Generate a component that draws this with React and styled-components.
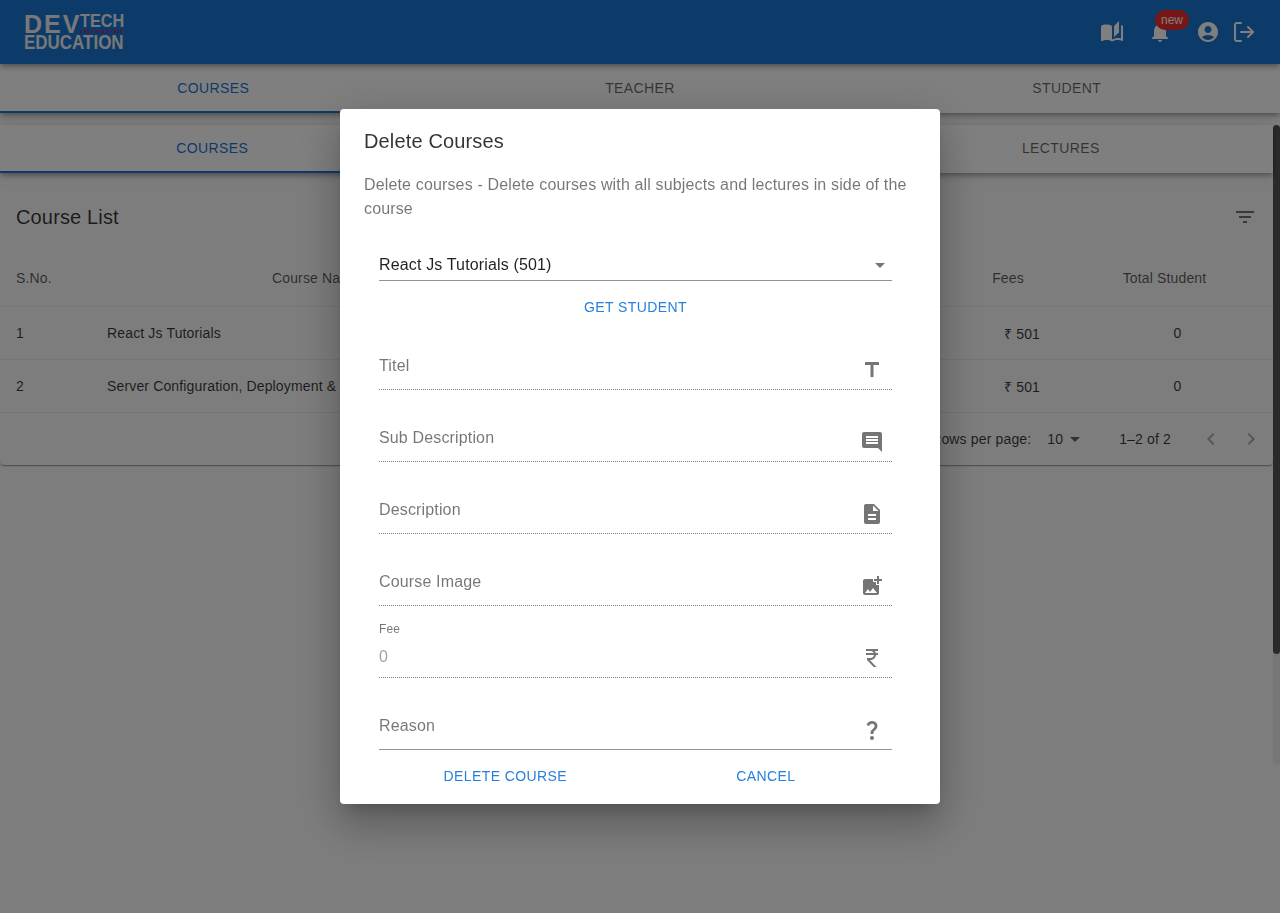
import React from "react";
import styled, { createGlobalStyle } from "styled-components";
import {
  MdAutoStories,
  MdNotifications,
  MdAccountCircle,
  MdFilterList,
  MdArrowDropDown,
  MdChevronLeft,
  MdChevronRight,
  MdTitle,
  MdComment,
  MdDescription,
  MdAddPhotoAlternate,
  MdCurrencyRupee,
  MdQuestionMark
} from "react-icons/md";
import { LogOut } from "lucide-react";

const GlobalStyle = createGlobalStyle`
  * { box-sizing: border-box; }
  html, body {
    margin: 0;
    height: 913px;
    overflow: hidden;
    background: #fafafa;
    font-family: "Liberation Sans", Arial, sans-serif;
    color: rgba(0, 0, 0, 0.87);
  }
`;

const AppBar = styled.header`
  position: relative;
  z-index: 3;
  height: 64px;
  padding: 0 24px;
  display: flex;
  align-items: center;
  justify-content: space-between;
  background: #1976d2;
  color: #fff;
  box-shadow: 0 2px 4px -1px rgba(0,0,0,.2), 0 4px 5px rgba(0,0,0,.14), 0 1px 10px rgba(0,0,0,.12);
`;

const Logo = styled.div`
  width: 100px;
  height: 34px;
  margin-top: -1px;
  color: #f0f0f0;
  font-weight: 700;
  white-space: nowrap;
`;

const LogoTop = styled.div`
  display: flex;
  height: 19px;
`;

const LogoDev = styled.span`
  width: 56px;
  font-size: 25px;
  line-height: 19px;
  letter-spacing: 2px;
`;

const LogoSide = styled.div`
  display: flex;
  flex-direction: column;
`;

const LogoTech = styled.span`
  font-size: 18px;
  line-height: 13px;
  transform: scaleX(0.9);
  transform-origin: left;
`;

const LogoTag = styled.span`
  margin-top: 1px;
  font-size: 4.4px;
  line-height: 5px;
  color: #c2185b;
`;

const LogoBottom = styled.div`
  margin-top: 1px;
  font-size: 19.5px;
  line-height: 14px;
  transform: scaleX(0.87);
  transform-origin: left;
`;

const HeaderIcons = styled.div`
  display: flex;
  align-items: center;
`;

const HeaderButton = styled.span`
  position: relative;
  width: 48px;
  height: 48px;
  display: flex;
  align-items: center;
  justify-content: center;
  font-size: 24px;
`;

const LogoutButton = styled.span`
  width: 24px;
  height: 24px;
  display: flex;
  align-items: center;
  justify-content: center;
`;

const Badge = styled.span`
  position: absolute;
  top: 2px;
  left: 19px;
  height: 20px;
  width: 34px;
  border-radius: 10px;
  background: #f02a2a;
  color: #fff;
  font-size: 12px;
  line-height: 20px;
  text-align: center;
`;

const TabBar = styled.nav`
  position: relative;
  z-index: ${p => (p.$top ? 2 : 1)};
  flex: none;
  display: grid;
  grid-template-columns: repeat(3, 1fr);
  height: ${p => (p.$top ? 49 : 48)}px;
  background: #fff;
  box-shadow: 0 2px 4px -1px rgba(0,0,0,.2), 0 4px 5px rgba(0,0,0,.14), 0 1px 10px rgba(0,0,0,.12);
`;

const Tab = styled.div`
  display: flex;
  align-items: center;
  justify-content: center;
  font-size: 14px;
  letter-spacing: 0.4px;
  text-transform: uppercase;
  color: ${p => (p.$active ? "#1976d2" : "rgba(0,0,0,.6)")};
  border-bottom: 2px solid ${p => (p.$active ? "#1976d2" : "transparent")};
`;

const ScrollArea = styled.main`
  height: 640px;
  margin-top: 12px;
  display: flex;
`;

const ScrollContent = styled.div`
  flex: 1;
  min-width: 0;
`;

const ScrollTrack = styled.div`
  flex: none;
  width: 7px;
  background: #eeeeee;
  border-radius: 4px;
`;

const ScrollThumb = styled.div`
  height: 529px;
  background: #555;
  border-radius: 4px;
`;

const TablePaper = styled.section`
  margin-top: 12px;
  border-radius: 4px;
  box-shadow: 0 2px 1px -1px rgba(0,0,0,.2), 0 1px 1px rgba(0,0,0,.14), 0 1px 3px rgba(0,0,0,.12);
`;

const TableToolbar = styled.div`
  height: 64px;
  padding: 0 16px;
  display: flex;
  align-items: center;
  justify-content: space-between;
`;

const TableTitle = styled.h2`
  margin: 0;
  font-size: 20px;
  font-weight: 400;
  letter-spacing: 0.15px;
  line-height: 1.6;
  color: rgba(0,0,0,.78);
`;

const ToolbarIcon = styled.span`
  display: flex;
  font-size: 24px;
  color: rgba(0,0,0,.54);
`;

const Row = styled.div`
  display: grid;
  grid-template-columns: 91px 442px 1fr 96px 217px;
  align-items: center;
  height: ${p => (p.$head ? 58 : 53)}px;
  border-bottom: 1px solid rgba(224,224,224,.6);
  font-size: 14px;
  letter-spacing: 0.15px;
  white-space: nowrap;
`;

const Cell = styled.div`
  padding: 0 16px 0 ${p => p.$inset || 16}px;
  text-align: ${p => p.$align || "left"};
  color: ${p => (p.$head ? "rgba(0,0,0,.65)" : "rgba(0,0,0,.78)")};
`;

const TableFooter = styled.div`
  height: 52px;
  padding-right: 2px;
  display: flex;
  align-items: center;
  justify-content: flex-end;
  font-size: 14px;
  letter-spacing: 0.15px;
  color: rgba(0,0,0,.78);
`;

const PerPage = styled.span`
  display: flex;
  align-items: center;
  margin-left: 16px;
  svg { font-size: 24px; color: rgba(0,0,0,.6); }
`;

const PageRange = styled.span`
  margin: 0 20px 0 32px;
`;

const PageArrow = styled.span`
  width: 40px;
  display: flex;
  justify-content: center;
  font-size: 24px;
  color: rgba(0,0,0,.3);
`;

const Backdrop = styled.div`
  position: fixed;
  inset: 0;
  z-index: 10;
  display: flex;
  align-items: center;
  justify-content: center;
  background: rgba(0,0,0,.5);
`;

const Dialog = styled.div`
  width: 600px;
  padding: 16px 24px 0;
  background: #fff;
  border-radius: 4px;
  box-shadow: 0 11px 15px -7px rgba(0,0,0,.2), 0 24px 38px 3px rgba(0,0,0,.14), 0 9px 46px 8px rgba(0,0,0,.12);
`;

const DialogTitle = styled.h2`
  margin: 0;
  font-size: 20px;
  font-weight: 400;
  letter-spacing: 0.15px;
  line-height: 32px;
  color: rgba(0,0,0,.8);
`;

const DialogText = styled.p`
  margin: 16px 0 0;
  font-size: 16px;
  letter-spacing: 0.15px;
  line-height: 24px;
  color: rgba(0,0,0,.54);
`;

const DialogForm = styled.form`
  margin: 0 0 0 15px;
  width: 513px;
`;

const SelectBox = styled.div`
  height: 32px;
  margin-top: 28px;
  display: flex;
  align-items: center;
  justify-content: space-between;
  border-bottom: 1px solid rgba(0,0,0,.42);
  font-size: 16px;
  letter-spacing: 0.15px;
  svg { font-size: 24px; color: rgba(0,0,0,.54); }
`;

const TextButton = styled.button`
  height: 22px;
  padding: 0;
  border: 0;
  background: none;
  font-family: inherit;
  font-size: 14px;
  letter-spacing: 0.4px;
  text-transform: uppercase;
  color: #2680dc;
`;

const CenterAction = styled.div`
  margin-top: 15px;
  display: flex;
  justify-content: center;
`;

const Field = styled.div`
  height: 72px;
  display: flex;
  flex-direction: column;
  justify-content: flex-end;
  border-bottom: 1px ${p => (p.$solid ? "solid rgba(0,0,0,.42)" : "dotted rgba(0,0,0,.5)")};
`;

const SmallLabel = styled.label`
  margin-bottom: 9px;
  font-size: 12px;
  letter-spacing: 0.15px;
  line-height: 14px;
  color: rgba(0,0,0,.54);
`;

const FieldRow = styled.div`
  display: flex;
  align-items: flex-end;
  justify-content: space-between;
`;

const FieldText = styled.span`
  padding-bottom: ${p => (p.$muted ? 8 : 11)}px;
  font-size: 16px;
  letter-spacing: 0.15px;
  line-height: 24px;
  color: ${p => (p.$muted ? "rgba(0,0,0,.38)" : "rgba(0,0,0,.54)")};
`;

const FieldIcon = styled.span`
  display: flex;
  padding-bottom: 7px;
  margin-right: 8px;
  font-size: 24px;
  color: #757575;
`;

const DialogActions = styled.div`
  display: grid;
  grid-template-columns: 1fr 1fr;
  column-gap: 8px;
  height: 54px;
  padding-top: 15px;
  text-align: center;
`;

const fields = [
  { label: "Titel", icon: <MdTitle /> },
  { label: "Sub Description", icon: <MdComment /> },
  { label: "Description", icon: <MdDescription /> },
  { label: "Course Image", icon: <MdAddPhotoAlternate /> },
  { label: "0", small: "Fee", muted: true, icon: <MdCurrencyRupee /> },
  { label: "Reason", solid: true, icon: <MdQuestionMark /> }
];

const courses = [
  { no: 1, name: "React Js Tutorials" },
  { no: 2, name: "Server Configuration, Deployment &" }
];

export default function App() {
  return (
    <>
      <GlobalStyle />
      <AppBar>
        <Logo>
          <LogoTop>
            <LogoDev>DEV</LogoDev>
            <LogoSide>
              <LogoTech>TECH</LogoTech>
              <LogoTag>A KEY OF SUCCESS</LogoTag>
            </LogoSide>
          </LogoTop>
          <LogoBottom>EDUCATION</LogoBottom>
        </Logo>
        <HeaderIcons>
          <HeaderButton><MdAutoStories /></HeaderButton>
          <HeaderButton>
            <MdNotifications />
            <Badge>new</Badge>
          </HeaderButton>
          <HeaderButton><MdAccountCircle /></HeaderButton>
          <LogoutButton><LogOut size={24} strokeWidth={2} /></LogoutButton>
        </HeaderIcons>
      </AppBar>

      <TabBar $top>
        <Tab $active>Courses</Tab>
        <Tab>Teacher</Tab>
        <Tab>Student</Tab>
      </TabBar>

      <ScrollArea>
        <ScrollContent>
          <TabBar>
            <Tab $active>Courses</Tab>
            <Tab>Subjects</Tab>
            <Tab>Lectures</Tab>
          </TabBar>
          <TablePaper>
            <TableToolbar>
              <TableTitle>Course List</TableTitle>
              <ToolbarIcon><MdFilterList /></ToolbarIcon>
            </TableToolbar>
            <Row $head>
              <Cell $head>S.No.</Cell>
              <Cell $head $align="center" $inset={24}>Course Name</Cell>
              <Cell />
              <Cell $head $align="center">Fees</Cell>
              <Cell $head $align="center">Total Student</Cell>
            </Row>
            {courses.map(course => (
              <Row key={course.no}>
                <Cell>{course.no}</Cell>
                <Cell>{course.name}</Cell>
                <Cell />
                <Cell $align="right">₹ 501</Cell>
                <Cell $align="center" $inset={42}>0</Cell>
              </Row>
            ))}
            <TableFooter>
              <span>Rows per page:</span>
              <PerPage>10<MdArrowDropDown /></PerPage>
              <PageRange>1–2 of 2</PageRange>
              <PageArrow><MdChevronLeft /></PageArrow>
              <PageArrow><MdChevronRight /></PageArrow>
            </TableFooter>
          </TablePaper>
        </ScrollContent>
        <ScrollTrack>
          <ScrollThumb />
        </ScrollTrack>
      </ScrollArea>

      <Backdrop>
        <Dialog>
          <DialogTitle>Delete Courses</DialogTitle>
          <DialogText>
            Delete courses - Delete courses with all subjects and lectures in side of the course
          </DialogText>
          <DialogForm>
            <SelectBox>
              React Js Tutorials (501)
              <MdArrowDropDown />
            </SelectBox>
            <CenterAction>
              <TextButton type="button">Get Student</TextButton>
            </CenterAction>
            {fields.map(field => (
              <Field key={field.label} $solid={field.solid}>
                {field.small && <SmallLabel>{field.small}</SmallLabel>}
                <FieldRow>
                  <FieldText $muted={field.muted}>{field.label}</FieldText>
                  <FieldIcon>{field.icon}</FieldIcon>
                </FieldRow>
              </Field>
            ))}
            <DialogActions>
              <TextButton type="button">Delete Course</TextButton>
              <TextButton type="button">Cancel</TextButton>
            </DialogActions>
          </DialogForm>
        </Dialog>
      </Backdrop>
    </>
  );
}
